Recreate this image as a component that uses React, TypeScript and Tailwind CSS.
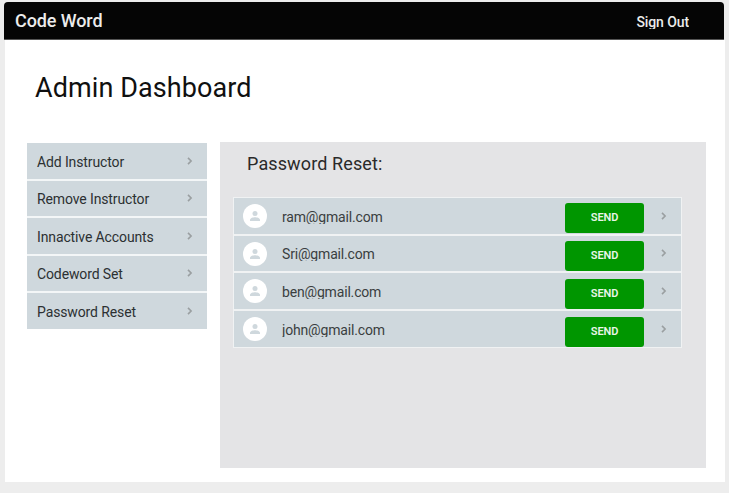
import React from "react";

const menu = ["Add Instructor", "Remove Instructor", "Innactive Accounts", "Codeword Set", "Password Reset"];
const accounts = ["ram@gmail.com", "Sri@gmail.com", "ben@gmail.com", "john@gmail.com"];

function Chevron() {
  return (
    <svg className="h-[8px] w-[6px] shrink-0" viewBox="0 0 6 8" fill="none" stroke="#9a9fa1" strokeWidth="1.6">
      <path d="M1 0.9 L4.1 4 L1 7.1" />
    </svg>
  );
}

function Avatar() {
  return (
    <span className="mt-px flex h-6 w-6 shrink-0 items-center justify-center rounded-full bg-white">
      <svg className="h-[10px] w-[10px]" viewBox="0 0 10 10" fill="#cfd8dd">
        <circle cx="5" cy="2.5" r="2.5" />
        <path d="M0 10V8.7C0 7 3.3 6.2 5 6.2S10 7 10 8.7V10Z" />
      </svg>
    </span>
  );
}

export default function App() {
  return (
    <div className="h-[493px] w-[729px] overflow-hidden bg-[#ededed] pt-[2px] font-['Roboto',sans-serif]">
      <header className="ml-1 flex h-[38px] w-[720px] items-center justify-between rounded-t-[4px] border-b border-[#555] bg-[#050505] pr-[35px] pl-[11px] font-medium text-[#ececec]">
        <span className="text-[18px] leading-[38px] tracking-[-0.1px]">Code Word</span>
        <span className="mt-[1px] h-[16px] overflow-hidden text-[14px] leading-[18px] tracking-[-0.1px]">Sign Out</span>
      </header>
      <main className="ml-[5px] h-[442px] w-[720px] bg-white pt-[29px]">
        <h1 className="ml-[30px] h-[74px] text-[27px] leading-[39px] tracking-[0.09px] text-[#101010]">Admin Dashboard</h1>
        <div className="flex items-start">
          <nav className="ml-[22px] w-[180px]">
            {menu.map((label) => (
              <a key={label} className="flex h-[37.5px] items-center justify-between border-b-2 border-[#f3f6f7] bg-[#cfd8dd] pr-[14px] pl-[10px] text-[14px] tracking-[-0.12px] text-[#2c3032] last:h-[36px] last:border-b-0">
                <span className="mt-[3px]">{label}</span>
                <Chevron />
              </a>
            ))}
          </nav>
          <section className="ml-[13px] h-[326px] w-[486px] -mt-px bg-[#e4e4e6] pt-[7px]">
            <h2 className="ml-[27px] h-[48px] text-[18px] leading-[30px] tracking-[0.12px] text-[#2a2a2a]">Password Reset:</h2>
            <div className="relative ml-[13px] w-[449px] border-t border-r border-l border-[#f0f2f3]">
              {accounts.map((mail) => (
                <div key={mail} className="flex h-[37.5px] items-center border-b-2 border-[#f0f2f3] bg-[#cfd8dd] pr-[14px] pl-[9px] last-of-type:border-b">
                  <Avatar />
                  <span className="mt-px ml-[15px] h-[15px] flex-1 overflow-hidden text-[14px] leading-[16px] tracking-[-0.17px] text-[#3a3e40]">{mail}</span>
                  <Chevron />
                </div>
              ))}
              <ul className="absolute top-[5px] right-[37px] flex flex-col gap-[8px]">
                {accounts.map((mail) => (
                  <li key={mail} className="flex">
                    <button className="h-[30px] w-[79px] rounded-[3px] bg-[#009600] text-[11px] font-semibold tracking-[-0.1px] text-[#e8f5e8]">SEND</button>
                  </li>
                ))}
              </ul>
            </div>
          </section>
        </div>
      </main>
    </div>
  );
}
